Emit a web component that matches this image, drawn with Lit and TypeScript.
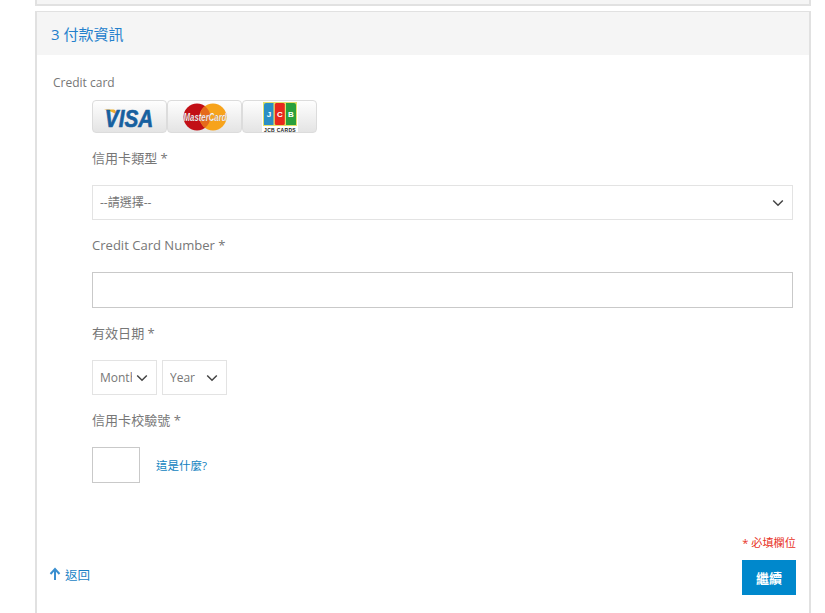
import { LitElement, html, css, svg } from "lit";
import { customElement } from "lit/decorators.js";

const chevron = html`<svg class="chev" width="12" height="8" viewBox="0 0 12 8"><path d="M1.2 1.5 L6 6.2 L10.8 1.5" fill="none" stroke="#444" stroke-width="1.5"/></svg>`;

const visa = svg`<svg width="70" height="26" viewBox="-6 0 70 26">
  <path d="M3 5.500 H12 C14 5.500 15 6.500 16 11 C13 8.500 8 6.500 3 5.500 Z" fill="#eeb02f"/>
  <text transform="translate(28 22.500) scale(.9 1)" text-anchor="middle" font-family="Liberation Sans" font-size="23" font-weight="700" font-style="italic" fill="#17609f" stroke="#17609f" stroke-width=".6">VISA</text>
</svg>`;

const mc = svg`<svg width="48" height="28" viewBox="0 0 48 28">
  <circle cx="16" cy="14" r="13.500" fill="#c20f16"/>
  <circle cx="32" cy="14" r="13.500" fill="#f7a31b"/>
  <path d="M24 3.200 A13.500 13.500 0 0 1 24 24.800 A13.500 13.500 0 0 1 24 3.200 Z" fill="#e56a1c"/>
  <text transform="translate(24 17.500) scale(.78 1)" text-anchor="middle" font-family="Liberation Sans" font-size="10" font-weight="700" font-style="italic" fill="#fff" stroke="#8a5a5a" stroke-width=".2">MasterCard</text>
</svg>`;

const jcb = svg`<svg width="36" height="30" viewBox="0 0 36 30">
  <rect x="0" y="0" width="36" height="30" fill="#fff"/>
  <rect x="1" y="0" width="34" height="24" fill="#e4e06a"/>
  <path d="M2 3 a2 2 0 0 1 2-2 H11.500 V23 H2 Z" fill="#2a8fc5"/>
  <rect x="12.800" y="1" width="10" height="22" rx="1.500" fill="#e8281c"/>
  <path d="M24 1 H32 a2 2 0 0 1 2 2 V23 H24 Z" fill="#2aa03c"/>
  <g font-family="Liberation Sans" font-size="8" font-weight="700" fill="#fff" text-anchor="middle">
    <text x="7" y="15">J</text>
    <text x="18" y="15">C</text>
    <text x="29" y="15">B</text>
  </g>
  <text x="18" y="29.500" text-anchor="middle" font-family="Liberation Sans" font-size="5" font-weight="700" fill="#222" letter-spacing=".3">JCB CARDS</text>
</svg>`;

@customElement("app-root")
export class AppRoot extends LitElement {
  static styles = css`
    :host {
      display: block;
      height: 613px;
      overflow: hidden;
      background: #fff;
      font-family: "Open Sans", "Noto Sans CJK TC", sans-serif;
      font-size: 13px;
      color: #777;
    }
    .page {
      width: 776px;
      margin-left: 35px;
      display: flex;
      flex-direction: column;
      gap: 5px;
    }
    .prev {
      height: 6px;
      box-sizing: border-box;
      background: #f5f5f5;
      border: 2px solid #e1e1e1;
      border-top: 0;
    }
    .panel {
      border: 2px solid #e1e1e1;
      border-bottom: 0;
      height: 640px;
      box-sizing: border-box;
      background: #fff;
    }
    .head {
      height: 43px;
      background: #f5f5f5;
      margin-top: -1px;
      display: flex;
      align-items: center;
      padding-left: 14px;
      font-size: 15px;
      color: #2480cc;
    }
    .body {
      padding: 19px 16px 0 16px;
    }
    .method {
      height: 18px;
      line-height: 18px;
      font-size: 12px;
      color: #777;
    }
    .fields {
      padding-left: 39px;
      margin-top: 8px;
      display: flex;
      flex-direction: column;
    }
    .cards {
      display: flex;
      height: 33px;
    }
    .card {
      width: 75px;
      height: 33px;
      box-sizing: border-box;
      border: 1px solid #dcdcdc;
      border-radius: 4px;
      background: linear-gradient(#fefefe, #e4e4e4);
      display: flex;
      align-items: center;
      justify-content: center;
    }
    .card svg { display: block; flex: none; }
    label {
      display: block;
      height: 18px;
      line-height: 18px;
      margin: 16px 0 18px;
      font-size: 13.060px;
      color: #777;
    }
    .sel {
      position: relative;
      display: block;
      height: 35px;
    }
    select {
      appearance: none;
      width: 100%;
      height: 100%;
      box-sizing: border-box;
      border: 1px solid #e3e3e3;
      border-radius: 0;
      background: #fff;
      padding: 0 7px;
      font: inherit;
      font-size: 12px;
      color: #777;
      outline: none;
    }
    .chev {
      position: absolute;
      right: 9px;
      top: 14px;
      pointer-events: none;
    }
    .text {
      display: block;
      width: 100%;
      height: 36px;
      box-sizing: border-box;
      border: 1px solid #c9c9c9;
      background: #fff;
      outline: none;
    }
    .date { display: flex; gap: 5px; }
    .date .sel { width: 65px; }
    .date select { padding-right: 24px; }
    .cvv-row { display: flex; align-items: center; gap: 16px; }
    .cvv {
      width: 48px;
      height: 36px;
      box-sizing: border-box;
      border: 1px solid #c9c9c9;
      background: #fff;
      outline: none;
    }
    .what {
      font-size: 11.500px;
      color: #0f7fc0;
      text-decoration: none;
    }
    .actions {
      margin-top: 50px;
      display: flex;
      justify-content: space-between;
      align-items: flex-end;
      margin-right: -3px;
    }
    .back {
      display: flex;
      align-items: center;
      gap: 4px;
      color: #1a7fc4;
      font-size: 12.500px;
      text-decoration: none;
      margin: 0 0 12px -4px;
      height: 18px;
    }
    .right {
      display: flex;
      flex-direction: column;
      align-items: flex-end;
      gap: 8px;
    }
    .req { color: #e8321e; font-size: 11.200px; line-height: 18px; height: 18px; margin-top: 1px; }
    button {
      width: 54px;
      height: 35px;
      border: 0;
      background: #0088cc;
      color: #fff;
      font: inherit;
      font-size: 13px;
      font-weight: 700;
      padding: 0;
    }
  `;

  render() {
    return html`
      <div class="page">
        <div class="prev"></div>
        <section class="panel">
          <div class="head">3 付款資訊</div>
          <div class="body">
            <div class="method">Credit card</div>
            <div class="fields">
              <div class="cards">
                <div class="card">${visa}</div>
                <div class="card">${mc}</div>
                <div class="card">${jcb}</div>
              </div>
              <label>信用卡類型 *</label>
              <div class="sel">
                <select><option>--請選擇--</option></select>
                ${chevron}
              </div>
              <label>Credit Card Number *</label>
              <input class="text" type="text" />
              <label>有效日期 *</label>
              <div class="date">
                <div class="sel"><select><option>Month</option></select>${chevron}</div>
                <div class="sel"><select><option>Year</option></select>${chevron}</div>
              </div>
              <label>信用卡校驗號 *</label>
              <div class="cvv-row">
                <input class="cvv" type="text" />
                <a class="what" href="#">這是什麼?</a>
              </div>
            </div>
            <div class="actions">
              <a class="back" href="#">
                <svg width="12" height="14" viewBox="0 0 12 14"><path d="M6 13 V2.500 M1.500 7 L6 2 L10.500 7" fill="none" stroke="#3a8fd0" stroke-width="2"/></svg>
                返回
              </a>
              <div class="right">
                <div class="req">* 必填欄位</div>
                <button>繼續</button>
              </div>
            </div>
          </div>
        </section>
      </div>
    `;
  }
}
